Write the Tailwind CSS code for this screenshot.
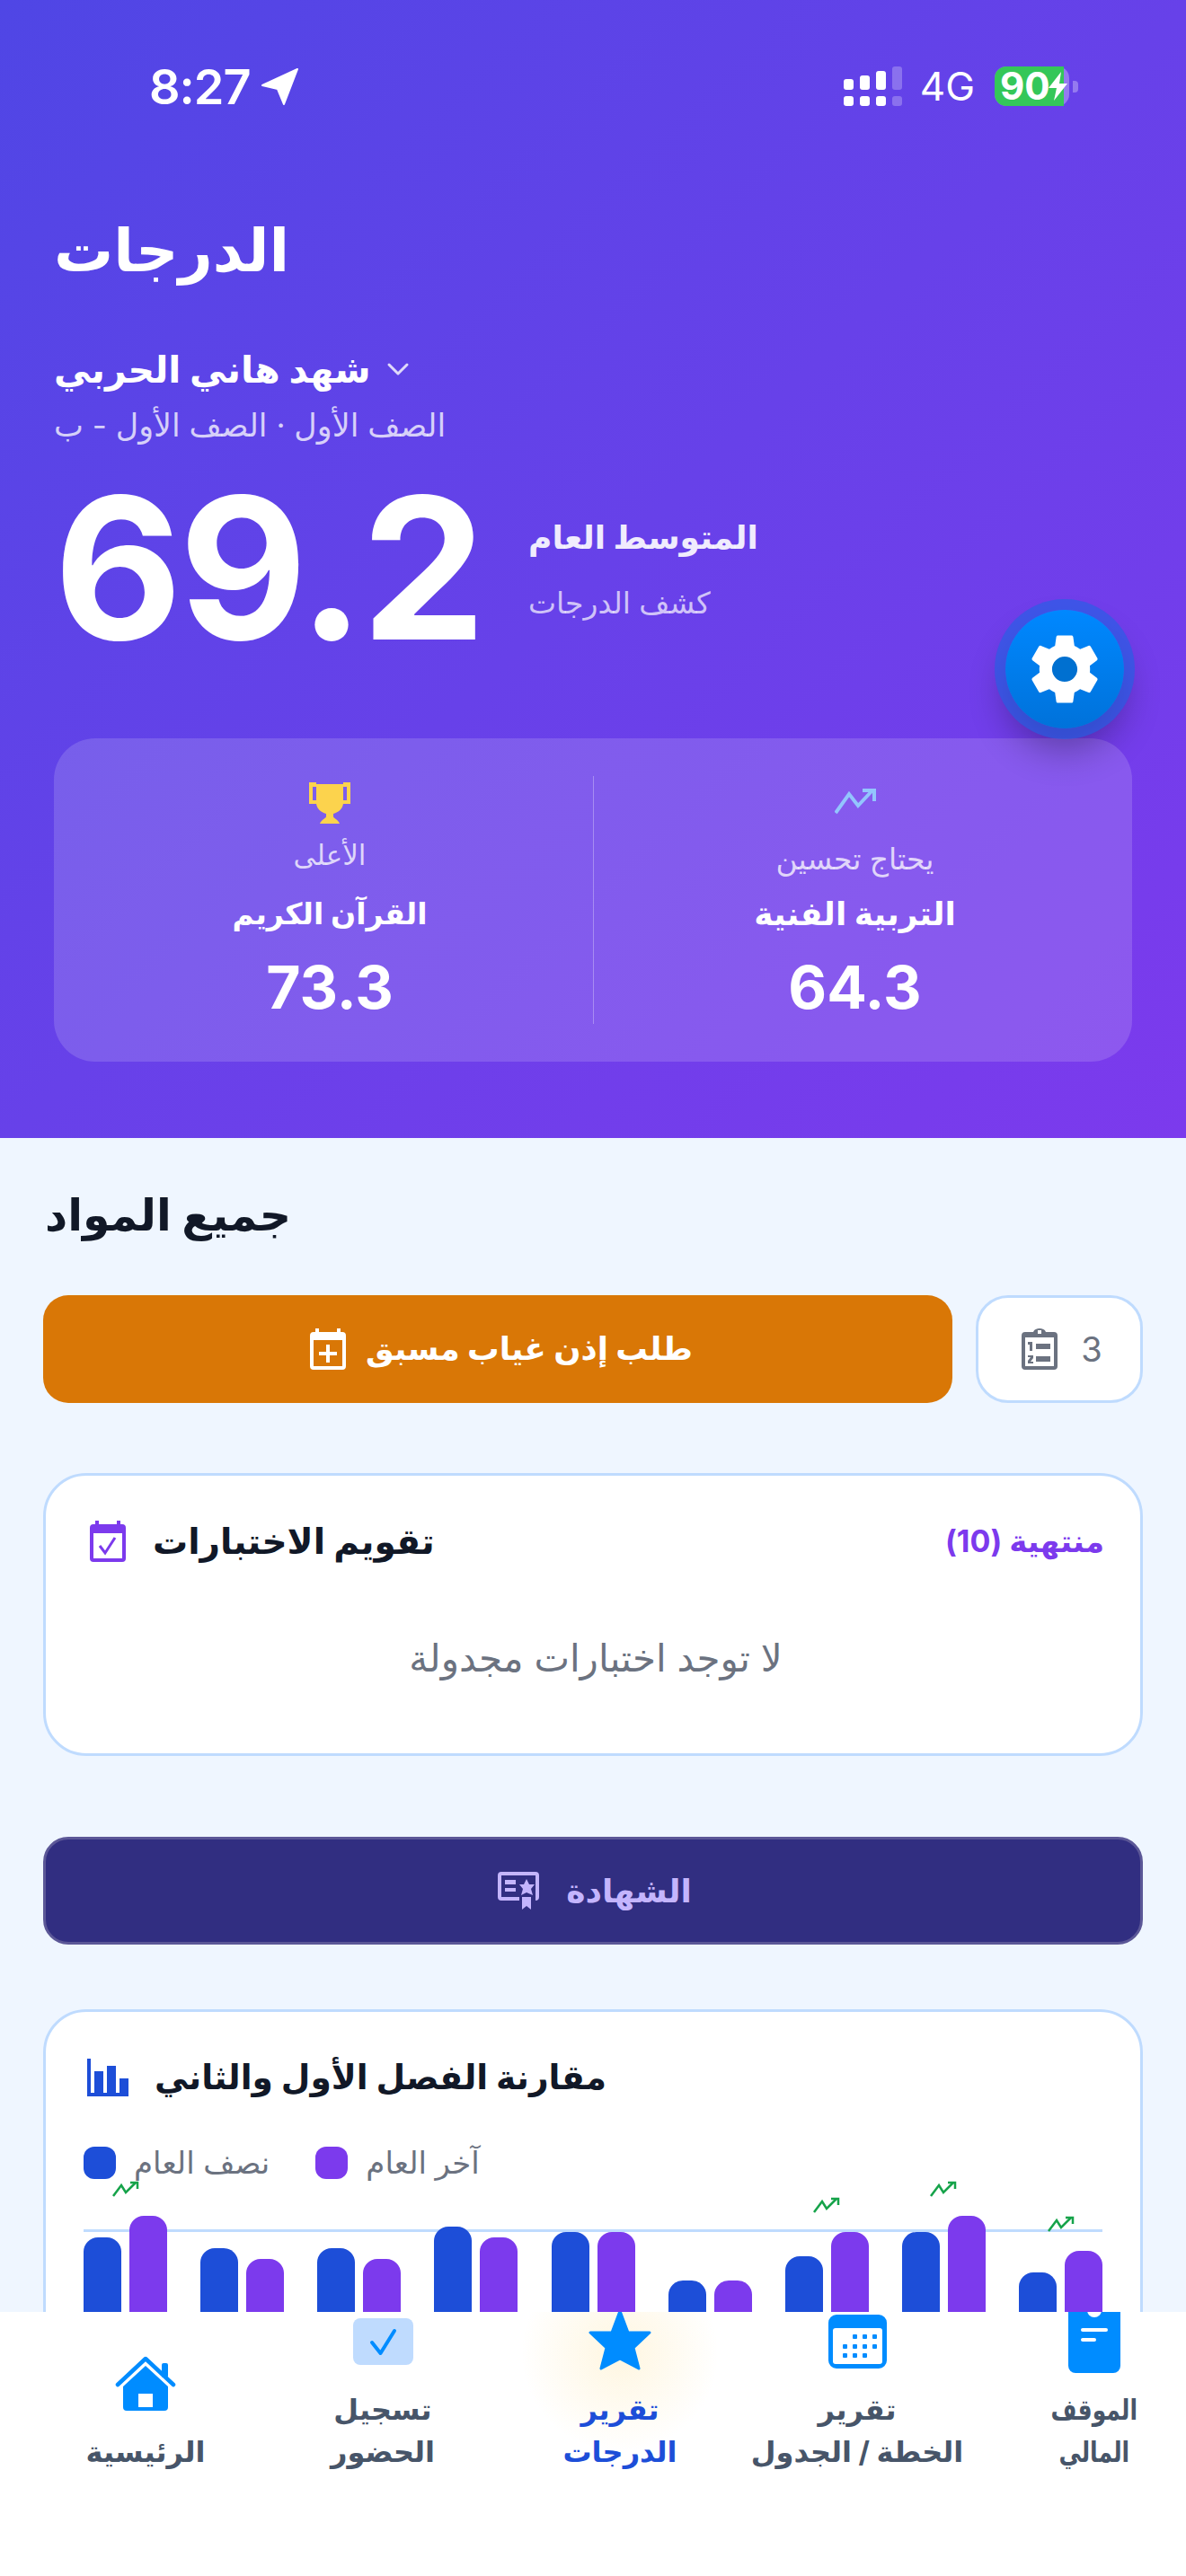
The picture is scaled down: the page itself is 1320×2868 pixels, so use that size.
<!DOCTYPE html>
<html lang="ar">
<head>
<meta charset="utf-8">
<script src="https://cdn.jsdelivr.net/npm/@tailwindcss/browser@4"></script>
</head>
<body class="m-0">
<div class="relative w-[1320px] h-[2868px] overflow-hidden bg-[#eff6ff] font-['Inter','DejaVu_Sans',sans-serif]">

  <!-- Header -->
  <header class="relative h-[1267px] bg-linear-to-br from-[#4f46e5] to-[#7c3aed] px-[60px] text-white">
    <!-- status bar -->
    <div class="flex items-center h-[50px] pt-[71px] box-content">
      <div class="flex items-center gap-[12px] ml-[106px] pt-[2px]">
        <span class="text-[54px] leading-[50px] font-semibold tracking-[-1px]">8:27</span>
        <svg class="w-[42px] h-[42px]" viewBox="0 0 42 42"><path fill="#fff" d="M40 1 L25 40 L18 23 L1 19 Z" stroke="#fff" stroke-width="2" stroke-linejoin="round"/></svg>
      </div>
      <div class="ml-auto mr-[60px] flex items-center">
        <svg class="w-[66px] h-[44px]" viewBox="0 0 66 44" fill="#fff">
          <rect x="0" y="14" width="11" height="12" rx="3"/><rect x="18" y="10" width="11" height="16" rx="3"/><rect x="36" y="5" width="11" height="21" rx="3"/><rect x="54" y="0" width="11" height="26" rx="3" opacity=".25"/>
          <rect x="0" y="33" width="11" height="11" rx="3"/><rect x="18" y="33" width="11" height="11" rx="3"/><rect x="36" y="33" width="11" height="11" rx="3"/><rect x="54" y="33" width="11" height="11" rx="3" opacity=".25"/>
        </svg>
        <span class="ml-[19px] text-[44px] leading-[44px] font-normal">4G</span>
        <div class="relative ml-[22px] w-[83px] h-[44px] rounded-[13px] bg-white/30">
          <div class="h-full w-[77px] rounded-l-[13px] bg-[#34c759] flex items-center pl-[6px] text-[42px] leading-[44px] font-bold text-white">90</div>
          <svg class="absolute left-[60px] top-[6px] w-[22px] h-[32px]" viewBox="0 0 22 32"><path fill="#fff" d="M14 0 L0 18 H9 L6 32 L21 13 H12 Z"/></svg>
        </div>
        <div class="ml-[4px] w-[6px] h-[13px] rounded-r-[4px] bg-white/30"></div>
      </div>
    </div>

    <h1 class="mt-[107px] text-[66px] leading-[100px] font-bold h-[100px]">الدرجات</h1>

    <div class="mt-[53px] flex items-center gap-[17px] h-[60px]">
      <span class="text-[41px] leading-[60px] font-bold">شهد هاني الحربي</span>
      <svg class="w-[26px] h-[16px] text-white/80" viewBox="0 0 26 16" fill="none" stroke="currentColor" stroke-width="3" stroke-linecap="round" stroke-linejoin="round"><path d="M3 3 L13 13 L23 3"/></svg>
    </div>
    <p class="mt-[10px] text-[35px] leading-[44px] text-white/75">الصف الأول · الصف الأول - ب</p>

    <div class="mt-[27px] flex items-start h-[220px]">
      <span class="block w-[528px] -ml-[60px] pl-[60px] box-content text-[220px] leading-[220px] font-bold tracking-[-3.5px]">69.2</span>
      <div class="pt-[48px]">
        <p class="text-[36px] leading-[56px] font-bold text-white/90">المتوسط العام</p>
        <p class="mt-[21px] text-[33px] leading-[48px] text-white/70">كشف الدرجات</p>
      </div>
    </div>

    <!-- stats -->
    <div class="absolute left-[60px] top-[822px] w-[1200px] h-[360px] rounded-[46px] bg-white/15 flex items-center">
      <div class="w-[600px] h-[276px] pl-[14px] flex flex-col items-center">
        <svg class="w-[46px] h-[46px] mt-[7px]" viewBox="0 0 46 46" fill="#fcd34d"><path fill-rule="evenodd" d="M0 0 H8 V2 H38 V0 H46 V24 H38 C37 30 33 33 27 35 V38 C27 40 32 41 34 46 H12 C14 41 19 40 19 38 V35 C13 33 9 30 8 24 H0 Z M4 5 V20 H8 V5 Z M38 5 V20 H42 V5 Z"/></svg>
        <p class="mt-[15px] text-[31px] leading-[40px] text-white/75">الأعلى</p>
        <p class="mt-[20px] text-[33px] leading-[50px] font-bold">القرآن الكريم</p>
        <p class="mt-[22px] text-[66px] leading-[70px] font-bold">73.3</p>
      </div>
      <div class="w-px h-[276px] bg-white/30"></div>
      <div class="w-[599px] h-[276px] pr-[18px] flex flex-col items-center">
        <svg class="w-[46px] h-[30px] mt-[13px]" viewBox="0 0 46 30" fill="none" stroke="#93c5fd" stroke-width="4"><path d="M1 28 L16 7 L26 20 L42 3"/><path d="M31 3 H44 V15"/></svg>
        <p class="mt-[29px] text-[33px] leading-[40px] text-white/75">يحتاج تحسين</p>
        <p class="mt-[16px] text-[36px] leading-[50px] font-bold">التربية الفنية</p>
        <p class="mt-[22px] text-[66px] leading-[70px] font-bold">64.3</p>
      </div>
    </div>

    <!-- FAB -->
    <button class="absolute left-[1119px] top-[679px] w-[132px] h-[132px] rounded-full bg-linear-to-b from-[#0088ff] to-[#0072da] shadow-[0_0_0_12px_rgba(30,100,230,0.6),0_24px_40px_rgba(0,0,0,0.3)] flex items-center justify-center">
      <svg class="w-[94px] h-[94px]" viewBox="0 0 24 24"><circle cx="12" cy="12" r="4" fill="#0070d0"/><path fill="#fff" d="M19.14 12.94c.04-.3.06-.61.06-.94 0-.32-.02-.64-.07-.94l2.03-1.58c.18-.14.23-.41.12-.61l-1.92-3.32c-.12-.22-.37-.29-.59-.22l-2.39.96c-.5-.38-1.03-.7-1.62-.94l-.36-2.54c-.04-.24-.24-.41-.48-.41h-3.84c-.24 0-.43.17-.47.41l-.36 2.54c-.59.24-1.13.57-1.62.94l-2.39-.96c-.22-.08-.47 0-.59.22L2.74 8.87c-.12.21-.08.47.12.61l2.03 1.58c-.05.3-.09.63-.09.94s.02.64.07.94l-2.03 1.58c-.18.14-.23.41-.12.61l1.92 3.32c.12.22.37.29.59.22l2.39-.96c.5.38 1.03.7 1.62.94l.36 2.54c.05.24.24.41.48.41h3.84c.24 0 .44-.17.47-.41l.36-2.54c.59-.24 1.13-.56 1.62-.94l2.39.96c.22.08.47 0 .59-.22l1.92-3.32c.12-.22.07-.47-.12-.61l-2.01-1.58zM12 15.6c-1.98 0-3.6-1.62-3.6-3.6s1.62-3.6 3.6-3.6 3.6 1.62 3.6 3.6-1.62 3.6-3.6 3.6z"/></svg>
    </button>
  </header>

  <!-- Body -->
  <main class="px-[48px]">
    <h2 class="mt-[46px] h-[80px] text-[49px] leading-[80px] font-bold text-[#111827] pl-[2px]">جميع المواد</h2>

    <div class="mt-[49px] flex gap-[26px] h-[120px]">
      <button class="w-[1012px] rounded-[28px] bg-[#d97706] text-white flex items-center justify-center gap-[22px] pl-[8px]">
        <svg class="w-[40px] h-[46px]" viewBox="0 0 40 46" fill="#fff"><path fill-rule="evenodd" d="M6 0 H10 V4 H30 V0 H34 V4 H36 A4 4 0 0 1 40 8 V42 A4 4 0 0 1 36 46 H4 A4 4 0 0 1 0 42 V8 A4 4 0 0 1 4 4 H6 Z M4 13 V42 H36 V13 Z M18 18 H22 V26 H30 V30 H22 V38 H18 V30 H10 V26 H18 Z"/></svg>
        <span class="text-[35.5px] leading-[50px] font-bold">طلب إذن غياب مسبق</span>
      </button>
      <button class="w-[186px] rounded-[36px] bg-white border-[3px] border-[#bfdbfe] text-[#6b7280] flex items-center justify-center gap-[26px] pl-[6px]">
        <svg class="w-[40px] h-[46px]" viewBox="0 0 40 46" fill="#6b7280"><path fill-rule="evenodd" d="M4 4 H13 C14 1 17 0 20 0 C23 0 26 1 27 4 H36 A4 4 0 0 1 40 8 V42 A4 4 0 0 1 36 46 H4 A4 4 0 0 1 0 42 V8 A4 4 0 0 1 4 4 Z M4 10 V42 H36 V10 Z M18 2 H22 V6 H18 Z M7 15 H12 V25 H9 V18 H7 Z M16 17 H32 V23 H16 Z M7 30 H13 V33 L10 37 H13 V39 H7 V36 L10 32 H7 Z M16 31 H32 V37 H16 Z"/></svg>
        <span class="text-[38px] leading-[46px]">3</span>
      </button>
    </div>

    <section class="mt-[78px] h-[315px] rounded-[48px] bg-white border-[3px] border-[#bfdbfe] pl-[46px] pr-[40px] pt-[45px]">
      <div class="flex items-center h-[56px]">
        <svg class="w-[40px] h-[46px] ml-[3px]" viewBox="0 0 40 46" fill="#7c3aed"><path fill-rule="evenodd" d="M6 0 H10 V4 H30 V0 H34 V4 H36 A4 4 0 0 1 40 8 V42 A4 4 0 0 1 36 46 H4 A4 4 0 0 1 0 42 V8 A4 4 0 0 1 4 4 H6 Z M4 14 V42 H36 V14 Z"/><path fill="none" stroke="#7c3aed" stroke-width="3" d="M11 28 L17 36 L28 19"/></svg>
        <span class="ml-[30px] text-[39px] leading-[56px] font-bold text-[#111827]">تقويم الاختبارات</span>
        <span class="ml-auto text-[34px] leading-[56px] font-bold text-[#7c3aed]">منتهية (10)</span>
      </div>
      <p class="mt-[77px] text-center text-[42px] leading-[50px] text-[#6b7280]">لا توجد اختبارات مجدولة</p>
    </section>

    <button class="mt-[90px] w-full h-[120px] rounded-[28px] bg-[#312e81] border-[3px] border-[#5b5797] text-[#c4b5fd] flex items-center justify-center gap-[30px] pl-[4px]">
      <svg class="w-[46px] h-[42px]" viewBox="0 0 46 42" fill="#c4b5fd"><path fill-rule="evenodd" d="M4 0 H42 A4 4 0 0 1 46 4 V28 A4 4 0 0 1 42 32 V28 H42 V4 H4 V28 H24 V32 H4 A4 4 0 0 1 0 28 V4 A4 4 0 0 1 4 0 Z M8 9 H20 V14 H8 Z M8 18 H20 V22 H8 Z M32 8 L35 14 L41 14 L37 19 L39 26 L32 23 L26 26 L28 19 L24 14 L29 14 Z M27 28 H37 V42 L32 38 L27 42 Z"/></svg>
      <span class="text-[36px] leading-[50px] font-bold">الشهادة</span>
    </button>

    <section class="mt-[72px] h-[500px] rounded-[48px] bg-white border-[3px] border-[#bfdbfe] px-[42px] pt-[43px] relative">
      <div class="flex items-center h-[60px]">
        <svg class="w-[46px] h-[42px] ml-[4px]" viewBox="0 0 46 42" fill="#1d4ed8"><path fill-rule="evenodd" d="M0 0 H4 V38 H8 V14 H18 V38 H22 V8 H32 V38 H36 V22 H46 V42 H0 Z"/></svg>
        <span class="ml-[29px] text-[37.6px] leading-[60px] font-bold text-[#111827]">مقارنة الفصل الأول والثاني</span>
      </div>
      <div class="mt-[47px] flex items-center gap-[20px] h-[36px]">
        <span class="w-[36px] h-[36px] rounded-[12px] bg-[#1d4ed8]"></span>
        <span class="text-[34px] leading-[36px] text-[#6b7280]">نصف العام</span>
        <span class="ml-[31px] w-[36px] h-[36px] rounded-[12px] bg-[#7c3aed]"></span>
        <span class="text-[34px] leading-[36px] text-[#6b7280]">آخر العام</span>
      </div>

      <div class="relative -mt-[27px] h-[200px] flex justify-between">
        <div class="absolute left-[0px] right-[0px] top-[83px] h-[3px] bg-[#bfdbfe]"></div>

        <div class="relative w-[93px] flex flex-col items-center justify-end">
          <svg class="w-[30px] h-[18px] mb-[21px]" viewBox="0 0 30 18" fill="none" stroke="#16a34a" stroke-width="2.5"><path d="M1 17 L10 5 L15 13 L26 2"/><path d="M20 2 H28 V9"/></svg>
          <div class="flex items-end gap-[9px]"><div class="w-[42px] h-[108px] rounded-t-[16px] bg-[#1d4ed8]"></div><div class="w-[42px] h-[132px] rounded-t-[16px] bg-[#7c3aed]"></div></div>
        </div>
        <div class="relative w-[93px] flex flex-col items-center justify-end">
          <div class="flex items-end gap-[9px]"><div class="w-[42px] h-[96px] rounded-t-[16px] bg-[#1d4ed8]"></div><div class="w-[42px] h-[84px] rounded-t-[16px] bg-[#7c3aed]"></div></div>
        </div>
        <div class="relative w-[93px] flex flex-col items-center justify-end">
          <div class="flex items-end gap-[9px]"><div class="w-[42px] h-[96px] rounded-t-[16px] bg-[#1d4ed8]"></div><div class="w-[42px] h-[84px] rounded-t-[16px] bg-[#7c3aed]"></div></div>
        </div>
        <div class="relative w-[93px] flex flex-col items-center justify-end">
          <div class="flex items-end gap-[9px]"><div class="w-[42px] h-[120px] rounded-t-[16px] bg-[#1d4ed8]"></div><div class="w-[42px] h-[108px] rounded-t-[16px] bg-[#7c3aed]"></div></div>
        </div>
        <div class="relative w-[93px] flex flex-col items-center justify-end">
          <div class="flex items-end gap-[9px]"><div class="w-[42px] h-[114px] rounded-t-[16px] bg-[#1d4ed8]"></div><div class="w-[42px] h-[114px] rounded-t-[16px] bg-[#7c3aed]"></div></div>
        </div>
        <div class="relative w-[93px] flex flex-col items-center justify-end">
          <div class="flex items-end gap-[9px]"><div class="w-[42px] h-[60px] rounded-t-[16px] bg-[#1d4ed8]"></div><div class="w-[42px] h-[60px] rounded-t-[16px] bg-[#7c3aed]"></div></div>
        </div>
        <div class="relative w-[93px] flex flex-col items-center justify-end">
          <svg class="w-[30px] h-[18px] mb-[21px]" viewBox="0 0 30 18" fill="none" stroke="#16a34a" stroke-width="2.5"><path d="M1 17 L10 5 L15 13 L26 2"/><path d="M20 2 H28 V9"/></svg>
          <div class="flex items-end gap-[9px]"><div class="w-[42px] h-[87px] rounded-t-[16px] bg-[#1d4ed8]"></div><div class="w-[42px] h-[114px] rounded-t-[16px] bg-[#7c3aed]"></div></div>
        </div>
        <div class="relative w-[93px] flex flex-col items-center justify-end">
          <svg class="w-[30px] h-[18px] mb-[21px]" viewBox="0 0 30 18" fill="none" stroke="#16a34a" stroke-width="2.5"><path d="M1 17 L10 5 L15 13 L26 2"/><path d="M20 2 H28 V9"/></svg>
          <div class="flex items-end gap-[9px]"><div class="w-[42px] h-[114px] rounded-t-[16px] bg-[#1d4ed8]"></div><div class="w-[42px] h-[132px] rounded-t-[16px] bg-[#7c3aed]"></div></div>
        </div>
        <div class="relative w-[93px] flex flex-col items-center justify-end">
          <svg class="w-[30px] h-[18px] mb-[21px]" viewBox="0 0 30 18" fill="none" stroke="#16a34a" stroke-width="2.5"><path d="M1 17 L10 5 L15 13 L26 2"/><path d="M20 2 H28 V9"/></svg>
          <div class="flex items-end gap-[9px]"><div class="w-[42px] h-[69px] rounded-t-[16px] bg-[#1d4ed8]"></div><div class="w-[42px] h-[93px] rounded-t-[16px] bg-[#7c3aed]"></div></div>
        </div>
      </div>
    </section>
  </main>

  <!-- Bottom nav -->
  <nav class="absolute left-0 top-[2574px] w-[1320px] h-[294px] bg-white overflow-hidden flex items-start pl-[30px] text-[#475569]">
    <a class="shrink-0 w-[264px] h-[179px] flex flex-col items-center justify-end">
      <svg class="w-[68px] h-[61px] mb-[22px]" viewBox="0 0 68 61" fill="#008cff"><path d="M34 11 L59 34 V57 A4 4 0 0 1 55 61 H13 A4 4 0 0 1 9 57 V34 Z M26 42 V57 H42 V42 Z" fill-rule="evenodd"/><path d="M3 32 L34 3 L65 32" fill="none" stroke="#008cff" stroke-width="4.5" stroke-linecap="round" stroke-linejoin="round"/><rect x="52" y="8" width="7" height="16" rx="2"/></svg>
      <span class="text-[32px] leading-[47px] font-bold">الرئيسية</span>
    </a>
    <a class="shrink-0 w-[264px] h-[179px] flex flex-col items-center justify-end">
      <svg class="w-[67px] h-[52px] mb-[26px]" viewBox="0 0 67 52"><rect width="67" height="52" rx="8" fill="#bfdbfe"/><path d="M21 27 L30.500 39 L46 14" fill="none" stroke="#008cff" stroke-width="4" stroke-linecap="round" stroke-linejoin="round"/></svg>
      <span class="text-[32px] leading-[47px] font-bold text-center">تسجيل<br>الحضور</span>
    </a>
    <a class="relative shrink-0 w-[264px] h-[179px] flex flex-col items-center justify-end bg-[radial-gradient(circle_at_50%_46px,rgba(251,191,36,0.14),transparent_110px)] text-[#1d4ed8]">
      <svg class="shrink-0 w-[72px] h-[68px] mb-[20px]" viewBox="0 0 72 68" fill="#008cff" stroke="#008cff" stroke-width="3" stroke-linejoin="round"><path d="M36 2 L45 26 H69 L51 43 L57 66 L36 55 L15 66 L21 43 L3 26 H27 Z"/></svg>
      <span class="text-[32px] leading-[47px] font-bold text-center">تقرير<br>الدرجات</span>
    </a>
    <a class="shrink-0 w-[264px] h-[179px] flex flex-col items-center justify-end">
      <svg class="w-[65px] h-[60px] mb-[22px]" viewBox="0 0 65 60" fill="#008cff"><path fill-rule="evenodd" d="M9 0 H56 A9 9 0 0 1 65 9 V51 A9 9 0 0 1 56 60 H9 A9 9 0 0 1 0 51 V9 A9 9 0 0 1 9 0 Z M8 15 A3 3 0 0 0 5 18 V52 A3 3 0 0 0 8 55 H57 A3 3 0 0 0 60 52 V18 A3 3 0 0 0 57 15 Z"/><g><rect x="27" y="22" width="5" height="5" rx="1"/><rect x="38" y="22" width="5" height="5" rx="1"/><rect x="49" y="22" width="5" height="5" rx="1"/><rect x="16" y="33" width="5" height="5" rx="1"/><rect x="27" y="33" width="5" height="5" rx="1"/><rect x="38" y="33" width="5" height="5" rx="1"/><rect x="49" y="33" width="5" height="5" rx="1"/><rect x="16" y="43" width="5" height="5" rx="1"/><rect x="27" y="43" width="5" height="5" rx="1"/><rect x="38" y="43" width="5" height="5" rx="1"/></g></svg>
      <span class="text-[32px] leading-[47px] font-bold text-center whitespace-nowrap">تقرير<br>الخطة / الجدول</span>
    </a>
    <a class="shrink-0 w-[264px] h-[179px] flex flex-col items-center justify-end">
      <svg class="shrink-0 w-[58px] h-[90px] mb-[17px]" viewBox="0 0 58 90" fill="#008cff"><path d="M8 0 H50 A8 8 0 0 1 58 8 V82 A8 8 0 0 1 50 90 H8 A8 8 0 0 1 0 82 V8 A8 8 0 0 1 8 0 Z"/><circle cx="29" cy="20" r="8" fill="#fff"/><rect x="14" y="40" width="30" height="4" rx="2" fill="#fff"/><rect x="14" y="51" width="17" height="4" rx="2" fill="#fff"/></svg>
      <span class="text-[32px] leading-[47px] font-bold text-center scale-x-[0.78]">الموقف<br>المالي</span>
    </a>
  </nav>
</div>
</body>
</html>
